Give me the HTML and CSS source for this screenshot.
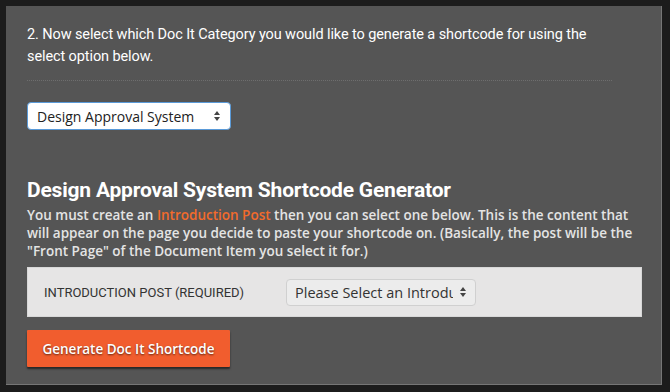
FILE: index.html
```html
<!DOCTYPE html>
<html lang="en">
<head>
    <meta charset="UTF-8">
    <title>Doc It Shortcode Generator</title>
    <link rel="stylesheet" href="styles.css">
</head>
<body>

    <div class="panel">
        <p class="step-text">2. Now select which Doc It Category you would like to generate a shortcode for using the select option below.</p>

        <div class="divider"></div>

        <div class="select-box category-select">
            <span class="select-value">Design Approval System</span>
            <svg class="select-arrows" width="8" height="12" viewBox="0 0 8 12">
                <path d="M4 1 L7 5 L1 5 Z" fill="#444"/>
                <path d="M4 11 L7 7 L1 7 Z" fill="#444"/>
            </svg>
        </div>

        <h2 class="generator-title">Design Approval System Shortcode Generator</h2>
        <p class="generator-desc">You must create an <span class="highlight">Introduction Post</span> then you can select one below. This is the content that will appear on the page you decide to paste your shortcode on. (Basically, the post will be the "Front Page" of the Document Item you select it for.)</p>

        <div class="field-row">
            <label class="field-label">Introduction Post (Required)</label>
            <div class="select-box post-select">
                <span class="select-value">Please Select an Introduction Post</span>
                <svg class="select-arrows" width="8" height="12" viewBox="0 0 8 12">
                    <path d="M4 1 L7 5 L1 5 Z" fill="#444"/>
                    <path d="M4 11 L7 7 L1 7 Z" fill="#444"/>
                </svg>
            </div>
        </div>

        <button class="generate-btn">Generate Doc It Shortcode</button>
    </div>

</body>
</html>
```

FILE: styles.css
```css
/* Global Styles */
* {
    margin: 0;
    padding: 0;
    box-sizing: border-box;
}

body {
    background-color: #1c1c1c;
    font-family: "Open Sans", sans-serif;
    padding: 6px 8px 7px 6px;
    height: 392px;
    overflow: hidden;
}

.panel {
    width: 656px;
    height: 379px;
    background-color: #555;
    border-right: 1px solid #767676;
    border-bottom: 1px solid #767676;
    padding: 18px 20px 0 21px;
}

.step-text {
    font-family: "Roboto", sans-serif;
    font-size: 14.5px;
    line-height: 22px;
    letter-spacing: -0.1px;
    color: #fff;
    width: 590px;
}

.divider {
    width: 585px;
    border-top: 1px dotted #6e6e6e;
    margin-top: 12px;
}

/* Fake select boxes */
.select-box {
    display: flex;
    align-items: center;
    justify-content: space-between;
    border-radius: 4px;
    overflow: hidden;
    white-space: nowrap;
}

.select-value {
    overflow: hidden;
    flex: 1;
}

.select-arrows {
    flex-shrink: 0;
    margin-left: 6px;
}

.category-select {
    width: 204px;
    height: 28px;
    margin-top: 21px;
    background-color: #fff;
    border: 1px solid #5a9ad8;
    padding: 0 9px 0 9px;
    font-size: 14px;
    color: #222;
}

.generator-title {
    font-family: "Roboto", sans-serif;
    font-size: 21px;
    line-height: 26px;
    letter-spacing: -0.2px;
    font-weight: bold;
    color: #fff;
    margin-top: 47px;
}

.generator-desc {
    font-size: 13.5px;
    font-weight: 600;
    line-height: 18px;
    color: #e4e4e4;
    margin-top: 3px;
}

.highlight {
    color: #f36b2c;
}

.field-row {
    display: flex;
    align-items: center;
    width: 615px;
    height: 50px;
    margin-top: 7px;
    background-color: #e6e5e5;
    border: 1px solid #d8d8d8;
    padding: 0 0 0 16px;
}

.field-label {
    width: 242px;
    font-family: "Roboto", sans-serif;
    font-size: 13px;
    text-transform: uppercase;
    color: #333;
}

.post-select {
    width: 190px;
    height: 27px;
    background-color: #ececec;
    border: 1px solid #d0d0d0;
    padding: 0 8px 0 8px;
    font-size: 14.5px;
    color: #333;
}

.generate-btn {
    display: block;
    width: 203px;
    height: 37px;
    margin-top: 13px;
    background-color: #f15d2e;
    border: none;
    border-radius: 1px;
    box-shadow: 0 2px 2px rgba(0, 0, 0, 0.55);
    font-family: "Open Sans", sans-serif;
    font-size: 13.5px;
    font-weight: 600;
    color: #fff;
    text-shadow: 0 1px 2px rgba(0, 0, 0, 0.6);
}
```
